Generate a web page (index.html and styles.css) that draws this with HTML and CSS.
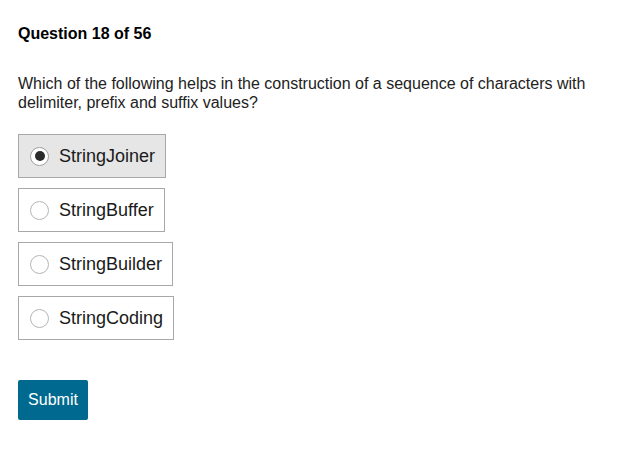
FILE: index.html
```html
<!DOCTYPE html>
<html>
<head>
<meta charset="utf-8">
<link rel="stylesheet" href="styles.css">
</head>
<body>
<div class="quiz">
  <h1 class="qnum">Question 18 of 56</h1>
  <p class="qtext">Which of the following helps in the construction of a sequence of characters with delimiter, prefix and suffix values?</p>
  <div class="options">
    <label class="option selected"><span class="radio checked"></span><span class="label">StringJoiner</span></label>
    <label class="option"><span class="radio"></span><span class="label">StringBuffer</span></label>
    <label class="option"><span class="radio"></span><span class="label">StringBuilder</span></label>
    <label class="option"><span class="radio"></span><span class="label">StringCoding</span></label>
  </div>
  <button class="submit">Submit</button>
</div>
</body>
</html>
```
FILE: styles.css
```css
html, body {
  margin: 0;
  padding: 0;
  background: #fff;
}
body {
  font-family: "Liberation Sans", Arial, sans-serif;
  color: #1a1a1a;
}
.quiz {
  padding: 25px 18px;
}
.qnum {
  margin: 0;
  font-size: 16px;
  font-weight: bold;
  line-height: 18px;
  color: #000;
}
.qtext {
  margin: 31px 0 0;
  font-size: 16px;
  line-height: 19px;
  color: #222;
  padding-right: 20px;
}
.options {
  margin-top: 22px;
  display: flex;
  flex-direction: column;
  align-items: flex-start;
  gap: 10px;
}
.option {
  display: flex;
  align-items: center;
  height: 44px;
  box-sizing: border-box;
  border: 1px solid #a8a8a8;
  padding: 0 10px 0 11px;
  background: #fff;
}
.option.selected {
  background: #e6e6e6;
}
.radio {
  width: 19px;
  height: 19px;
  box-sizing: border-box;
  border-radius: 50%;
  border: 1px solid #b5b5b5;
  background: #fff;
  display: flex;
  align-items: center;
  justify-content: center;
}
.radio.checked {
  border-color: #a0a0a0;
}
.radio.checked::after {
  content: "";
  width: 10px;
  height: 10px;
  border-radius: 50%;
  background: #2b2b2b;
}
.label {
  margin-left: 10px;
  font-size: 18px;
  color: #1a1a1a;
}
.submit {
  margin-top: 40px;
  width: 70px;
  height: 40px;
  border: none;
  border-radius: 2px;
  background: #006990;
  color: #fff;
  font-family: "Liberation Sans", Arial, sans-serif;
  font-size: 16px;
  padding: 0;
}
```
